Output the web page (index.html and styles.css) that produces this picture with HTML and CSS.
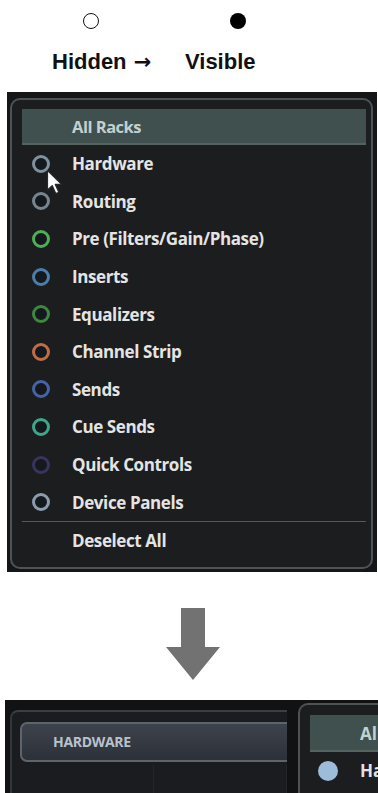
FILE: index.html
```html
<!DOCTYPE html>
<html lang="en">
<head>
<meta charset="utf-8">
<title>Racks visibility</title>
<link rel="stylesheet" href="styles.css">
</head>
<body>
<div class="legend">
  <div class="legend-icons">
    <span class="dot dot-hollow"></span>
    <span class="dot dot-filled"></span>
  </div>
  <div class="legend-labels">
    <span class="lbl lbl-hidden">Hidden <span class="arrow-glyph">→</span></span>
    <span class="lbl">Visible</span>
  </div>
</div>

<div class="rack-panel">
  <div class="menu">
    <div class="menu-header">All Racks</div>
    <ul class="menu-list">
      <li class="menu-row"><span class="ring c-hardware"></span><span class="label">Hardware</span>
        <svg class="cursor" width="18" height="26" viewBox="0 0 18 26"><path d="M1.5 1.5 L1.5 21 L6.2 16.6 L9.8 24.6 L12.8 23.3 L9.3 15.4 L15.6 15.4 Z" fill="#ffffff" stroke="#2a2a2a" stroke-width="1.2" stroke-linejoin="round"/></svg>
      </li>
      <li class="menu-row"><span class="ring c-routing"></span><span class="label">Routing</span></li>
      <li class="menu-row"><span class="ring c-pre"></span><span class="label">Pre (Filters/Gain/Phase)</span></li>
      <li class="menu-row"><span class="ring c-inserts"></span><span class="label">Inserts</span></li>
      <li class="menu-row"><span class="ring c-eq"></span><span class="label">Equalizers</span></li>
      <li class="menu-row"><span class="ring c-strip"></span><span class="label">Channel Strip</span></li>
      <li class="menu-row"><span class="ring c-sends"></span><span class="label">Sends</span></li>
      <li class="menu-row"><span class="ring c-cue"></span><span class="label">Cue Sends</span></li>
      <li class="menu-row"><span class="ring c-quick"></span><span class="label">Quick Controls</span></li>
      <li class="menu-row"><span class="ring c-device"></span><span class="label">Device Panels</span></li>
    </ul>
    <div class="menu-divider"></div>
    <div class="menu-row deselect"><span class="label">Deselect All</span></div>
  </div>
</div>

<div class="down-arrow">
  <svg width="54" height="72" viewBox="0 0 54 72"><path d="M15 0 H39 V39 H54 L27 72 L0 39 H15 Z" fill="#727272"/></svg>
</div>

<div class="result">
  <div class="mixer">
    <div class="mixer-inner">
      <div class="hw-button">HARDWARE</div>
      <div class="mixer-cols">
        <div class="mixer-col"></div>
        <div class="mixer-col"></div>
      </div>
    </div>
  </div>
  <div class="popup">
    <div class="popup-header">All</div>
    <div class="popup-row"><span class="dot-visible"></span><span class="label">Ha</span></div>
  </div>
</div>
</body>
</html>
```

FILE: styles.css
```css
html, body {
  margin: 0;
  padding: 0;
  background: #ffffff;
  height: 793px;
  overflow: hidden;
}
body {
  font-family: "Liberation Sans", Arial, sans-serif;
}

/* Legend */
.legend {
  height: 92px;
  box-sizing: border-box;
  padding-top: 13px;
}
.legend-icons {
  display: flex;
  height: 17px;
}
.dot {
  width: 16px;
  height: 16px;
  border-radius: 50%;
  box-sizing: border-box;
}
.dot-hollow {
  margin-left: 83px;
  border: 1.6px solid #111;
}
.dot-filled {
  margin-left: 131px;
  background: #000;
}
.legend-labels {
  display: flex;
  margin-top: 19px;
  line-height: 26px;
  font-size: 22px;
  font-weight: bold;
  color: #111;
}
.lbl-hidden {
  margin-left: 52px;
  width: 133px;
}
.arrow-glyph {
  font-family: "DejaVu Sans", sans-serif;
  font-size: 21px;
  font-weight: bold;
  margin-left: 1px;
}

/* Rack menu panel */
.rack-panel {
  margin-left: 7px;
  width: 370px;
  height: 480px;
  box-sizing: border-box;
  background: #151617;
  padding: 6px 4px 3px 3px;
}
.menu {
  box-sizing: border-box;
  height: 100%;
  border: 2px solid #505356;
  border-radius: 10px;
  background: #1b1d1f;
  padding: 9px 5px 0 10px;
  font-family: "Open Sans", "Liberation Sans", sans-serif;
  font-weight: 700;
}
.menu-header {
  height: 36px;
  line-height: 36px;
  box-sizing: border-box;
  background: #3f504e;
  border-bottom: 2px solid #55635f;
  padding-left: 50px;
  color: #c4d0ce;
  font-size: 16.5px;
  letter-spacing: -0.5px;
}
.menu-list {
  list-style: none;
  margin: 0;
  padding: 0;
}
.menu-row {
  position: relative;
  height: 37.6px;
  display: flex;
  align-items: center;
  color: #e4e4e4;
  font-size: 17px;
  letter-spacing: -0.4px;
}
.ring {
  width: 18px;
  height: 18px;
  box-sizing: border-box;
  border-radius: 50%;
  border: 3px solid #7e909e;
  background: #14191d;
  margin-left: 10px;
  margin-right: 22px;
  flex: none;
}
.c-hardware { border-color: #7f919f; }
.c-routing { border-color: #76858f; }
.c-pre { border-color: #4fae55; }
.c-inserts { border-color: #4d7daa; }
.c-eq { border-color: #3d873e; }
.c-strip { border-color: #bf6d47; }
.c-sends { border-color: #4663a6; }
.c-cue { border-color: #3ea789; }
.c-quick { border-color: #3a335e; }
.c-device { border-color: #8a9cad; }

.cursor {
  position: absolute;
  left: 24px;
  top: 24px;
}
.menu-divider {
  height: 1px;
  background: #56595c;
}
.deselect {
  height: 37px;
  padding-left: 50px;
}

/* Arrow */
.down-arrow {
  padding: 36px 0 0 166px;
  height: 128px;
  box-sizing: border-box;
}
.down-arrow svg { display: block; }

/* Result strip */
.result {
  margin-left: 5px;
  height: 93px;
  background: #111213;
  display: flex;
  align-items: flex-start;
  overflow: hidden;
}
.mixer {
  width: 282px;
  padding-top: 10px;
  flex: none;
}
.mixer-inner {
  margin-left: 5px;
  height: 83px;
  box-sizing: border-box;
  border-top: 2px solid #3b3e42;
  border-left: 2px solid #34373a;
  border-top-left-radius: 8px;
  background: #1a1c1f;
  padding: 10px 0 0 8px;
}
.hw-button {
  height: 40px;
  box-sizing: border-box;
  border: 2px solid #5d646c;
  border-right: none;
  border-radius: 7px 0 0 7px;
  background: linear-gradient(#3d434c, #2c3139);
  color: #b9c2cb;
  font-family: "Open Sans", "Liberation Sans", sans-serif;
  font-weight: 700;
  font-size: 14px;
  line-height: 36px;
  padding-left: 31px;
  letter-spacing: -0.3px;
}
.mixer-cols {
  display: flex;
  height: 30px;
  margin-top: 3px;
}
.mixer-col {
  width: 133px;
  border-right: 1px solid #24272a;
}
.popup {
  margin-left: 11px;
  margin-top: 3px;
  flex: 1;
  height: 90px;
  box-sizing: border-box;
  border-top: 2px solid #505356;
  border-left: 2px solid #505356;
  border-top-left-radius: 10px;
  background: #1b1d1f;
  padding: 10px 0 0 10px;
  font-family: "Open Sans", "Liberation Sans", sans-serif;
  font-weight: 700;
  white-space: nowrap;
}
.popup-header {
  height: 37px;
  line-height: 37px;
  box-sizing: border-box;
  background: #3f504e;
  border-bottom: 2px solid #55635f;
  padding-left: 50px;
  color: #c4d0ce;
  font-size: 17px;
}
.popup-row {
  height: 37px;
  display: flex;
  align-items: center;
  color: #e2e2e2;
  font-size: 17px;
}
.dot-visible {
  width: 20px;
  height: 20px;
  border-radius: 50%;
  background: #9dbcd9;
  margin-left: 8px;
  margin-right: 22px;
  flex: none;
}
```
